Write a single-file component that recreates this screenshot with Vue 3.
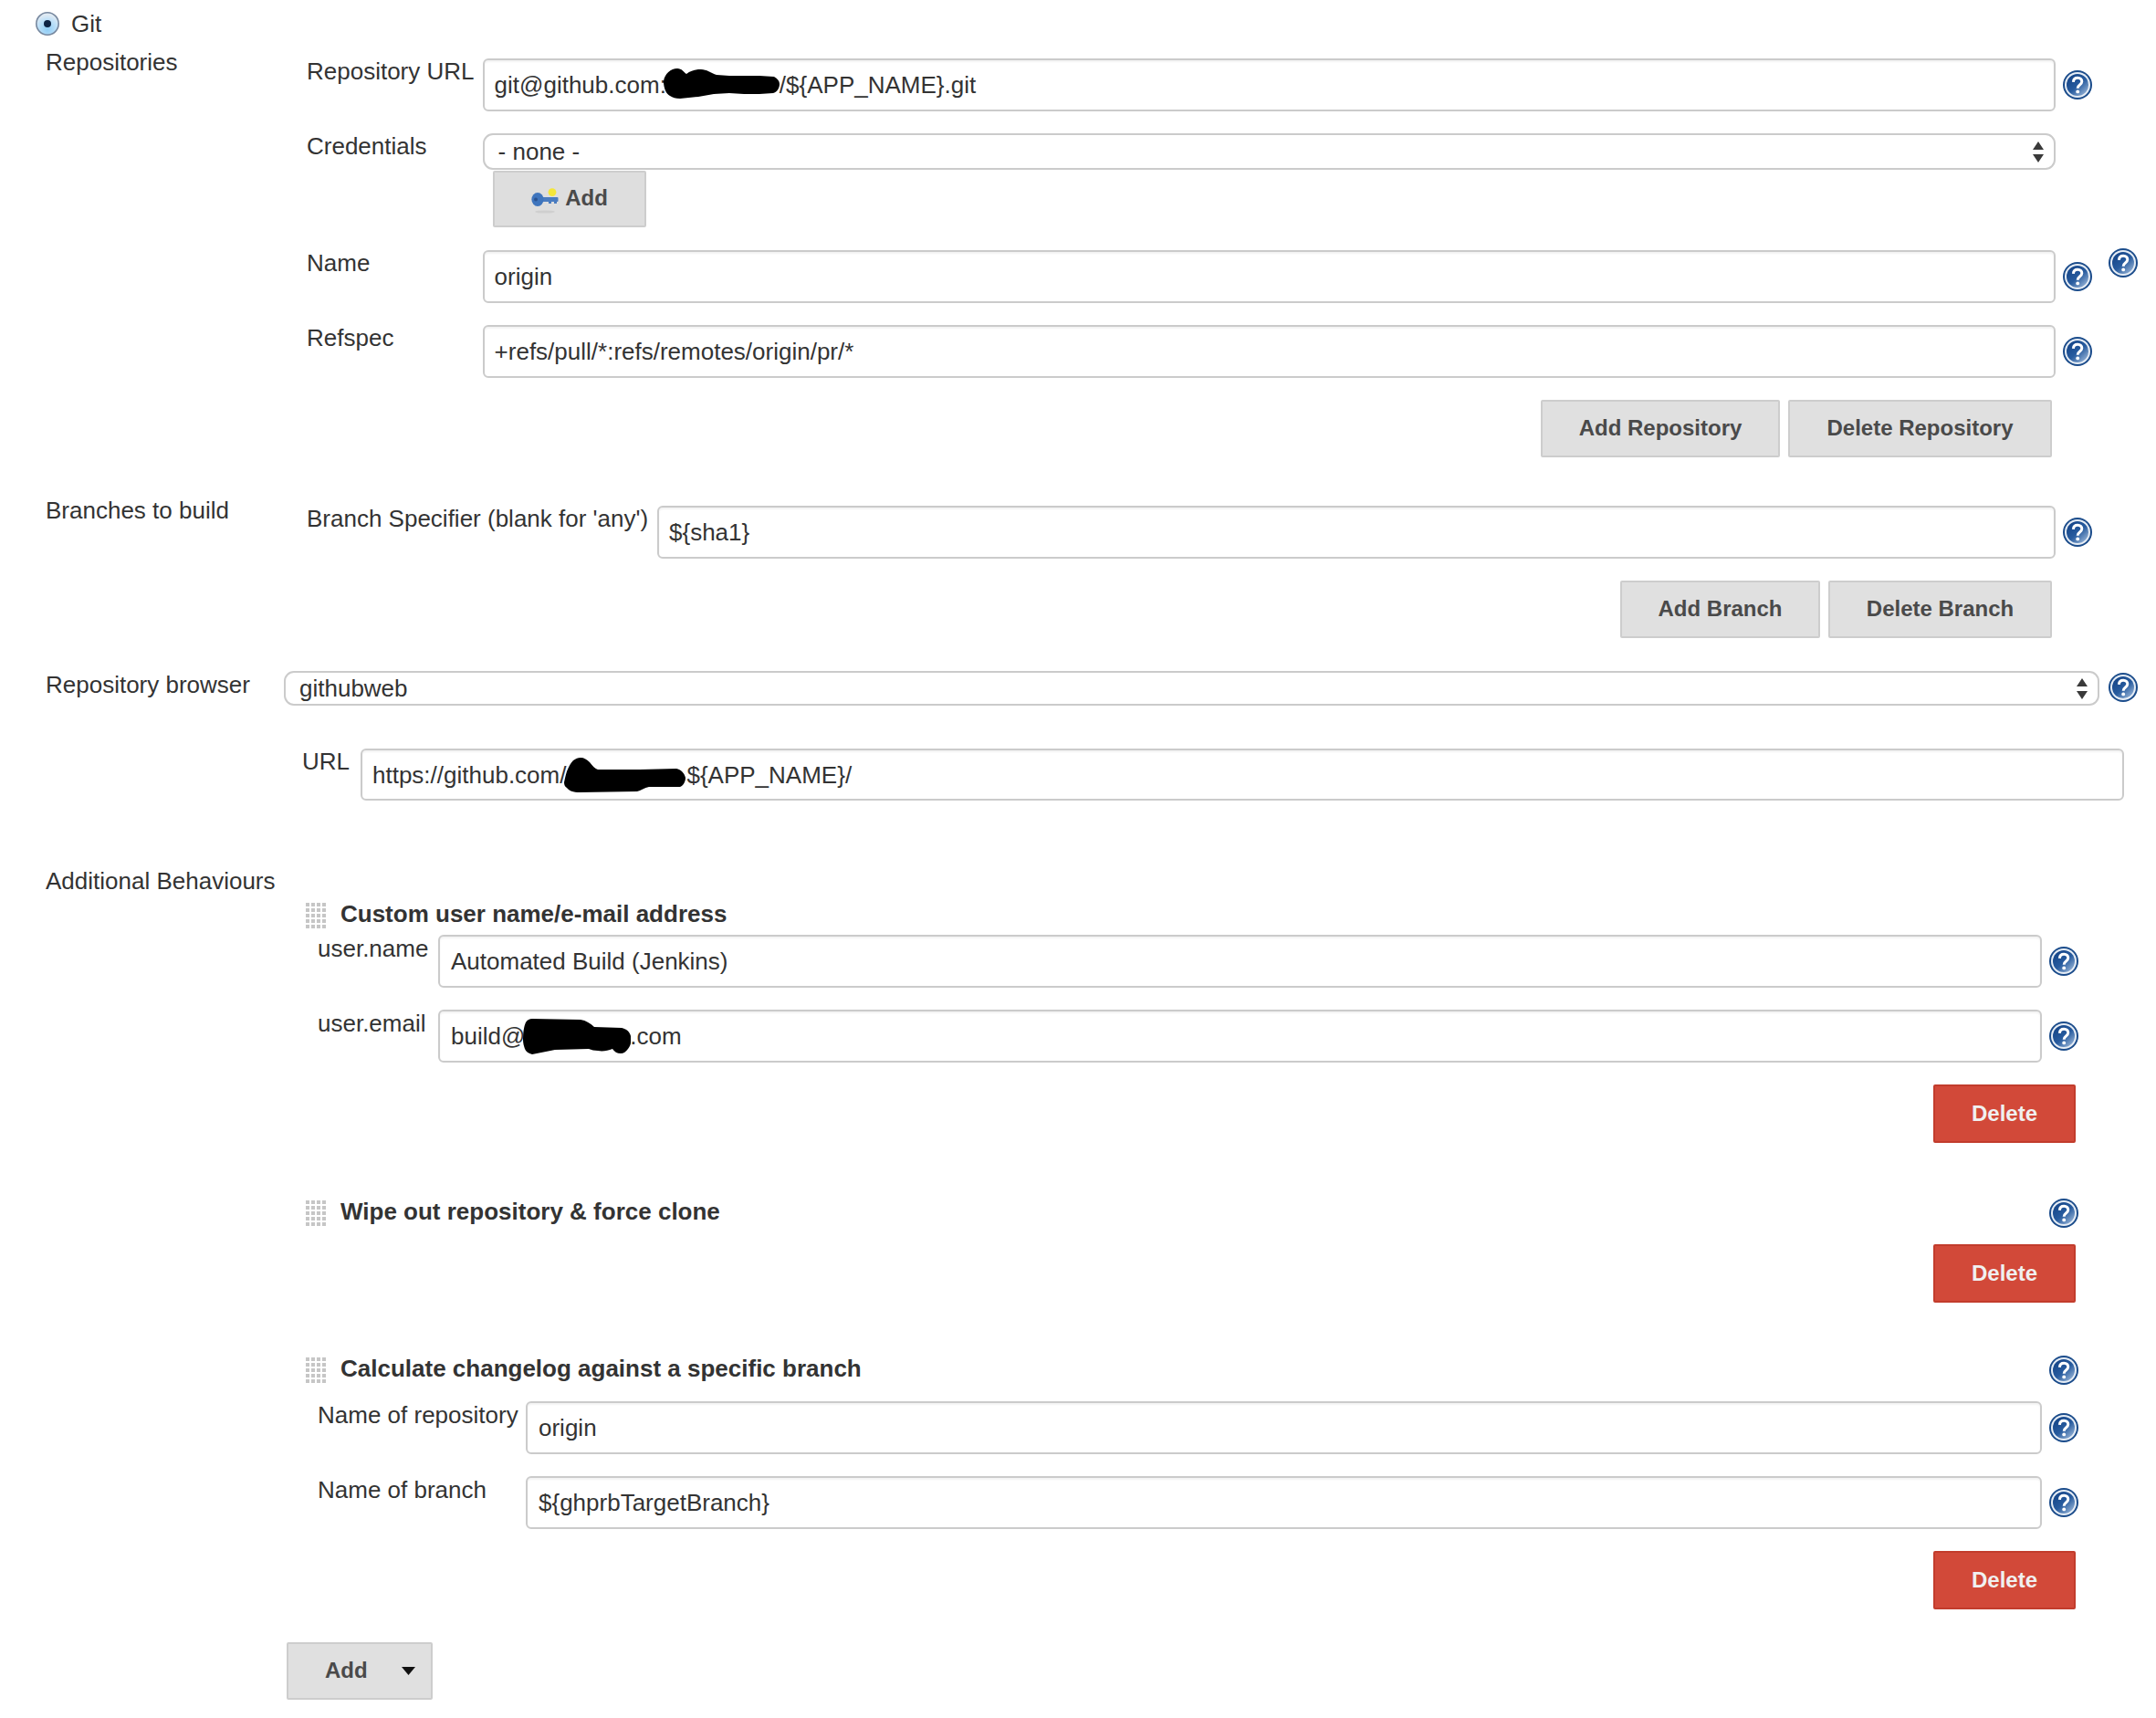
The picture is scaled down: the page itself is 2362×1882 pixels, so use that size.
<script setup>
const blobs = {
  a: 'M0 14C1 6 8 0 15 0C20 0 22 4 25 6C30 2 36 1 41 1C47 1 52 5 58 7L72 8L105 8L121 9C125 11 127 14 127 17C127 22 124 26 120 27L105 28L88 28L72 27L55 28L38 31L18 33C13 33 10 32 7 30C3 28 0 22 0 14Z',
  b: 'M0 27C1 22 2 18 3 15C5 10 7 6 10 3C13 1 15 0 18 0C22 0 25 2 28 5C31 9 34 12 37 13L83 13L123 12C128 13 132 17 133 22C133 27 130 31 127 32L93 32C88 33 84 36 80 37L17 38C10 38 5 36 3 33C1 32 0 30 0 27Z',
  c: 'M0 23C0 15 1 8 3 4C5 1 7 0 10 0L63 1C69 2 74 5 78 9L108 10C113 11 117 14 118 19C119 25 118 29 115 33C113 36 110 38 107 38C103 38 100 36 98 33C93 35 87 36 82 35C78 35 75 34 72 33L35 34L10 39C6 38 3 36 2 33C1 30 0 27 0 23Z'
}
</script>

<template>
  <div class="page">
    <svg class="sprite" width="0" height="0" aria-hidden="true">
      <defs>
        <linearGradient id="core" x1="0.15" y1="0.1" x2="0.9" y2="0.95">
          <stop offset="0" stop-color="#164689" />
          <stop offset="0.5" stop-color="#285c9f" />
          <stop offset="1" stop-color="#9ab6d8" />
        </linearGradient>
        <radialGradient id="radioFill" cx="0.5" cy="0.75" r="0.65">
          <stop offset="0" stop-color="#8fcdf6" />
          <stop offset="0.7" stop-color="#c3e2f8" />
          <stop offset="1" stop-color="#dfeaf3" />
        </radialGradient>
        <symbol id="help" viewBox="0 0 32 32">
          <circle cx="16" cy="16" r="16" fill="#1b4c8b" />
          <circle cx="16" cy="16" r="14" fill="#e6edf5" />
          <circle cx="16" cy="16" r="12" fill="url(#core)" />
          <path d="M11.4 12.8C11.6 9.8 13.6 8.3 16.2 8.3C19 8.3 20.8 10 20.8 12.3C20.8 14.3 19.6 15.2 18.2 16.2C16.8 17.2 16.2 18 16.2 19.8" fill="none" stroke="#fff" stroke-width="3" />
          <circle cx="16.2" cy="23.4" r="1.9" fill="#fff" />
        </symbol>
        <symbol id="grip" viewBox="0 0 23 29">
          <g fill="#c6c6c6">
            <rect v-for="d in 20" :key="d" :x="((d - 1) % 4) * 6 + 1" :y="Math.floor((d - 1) / 4) * 6 + 1" width="4" height="4" />
          </g>
        </symbol>
        <symbol id="updown" viewBox="0 0 12 23">
          <path d="M6 0L12 9H0ZM0 14H12L6 23Z" fill="#3a3a3a" />
        </symbol>
      </defs>
    </svg>

    <div class="git-row">
      <svg class="radio" viewBox="0 0 26 26">
        <circle cx="13" cy="13" r="12.2" fill="url(#radioFill)" stroke="#77889f" stroke-width="1.6" />
        <circle cx="13" cy="13" r="4" fill="#0e2444" />
      </svg>
      <span>Git</span>
    </div>

    <section class="group repos">
      <div class="side">Repositories</div>
      <div class="body">
        <div class="row">
          <label class="key k193">Repository URL</label>
          <div class="field">git@github.com:<svg class="blob b1" width="127" height="33" viewBox="0 0 127 33"><path :d="blobs.a" /></svg>/${APP_NAME}.git</div>
          <svg class="help"><use href="#help" /></svg>
        </div>
        <div class="row">
          <label class="key k193">Credentials</label>
          <div class="select">- none -<svg class="updown"><use href="#updown" /></svg></div>
          <span class="help-gap"></span>
        </div>
        <button class="btn key-btn">
          <svg class="key-icon" viewBox="0 0 30 30" width="30" height="30">
            <ellipse cx="15" cy="26" rx="11" ry="1.6" fill="#cfcfcf" />
            <circle cx="23" cy="4.6" r="4.4" fill="#f4e63a" />
            <rect x="8" y="10" width="21.5" height="5" rx="1" fill="#4a7cc0" />
            <path d="M19 14h3v3h-3zM25 14h3v3h-3z" fill="#4a7cc0" />
            <ellipse cx="7" cy="12.5" rx="6.6" ry="7.6" fill="#3f75bd" />
            <circle cx="5" cy="12.5" r="2" fill="#2a5390" />
          </svg>
          Add
        </button>
        <div class="row name-row">
          <label class="key k193">Name</label>
          <div class="field">origin</div>
          <svg class="help"><use href="#help" /></svg>
          <svg class="help help-outer"><use href="#help" /></svg>
        </div>
        <div class="row">
          <label class="key k193">Refspec</label>
          <div class="field">+refs/pull/*:refs/remotes/origin/pr/*</div>
          <svg class="help"><use href="#help" /></svg>
        </div>
        <div class="actions">
          <button class="btn add-repo">Add Repository</button>
          <button class="btn del-repo">Delete Repository</button>
        </div>
      </div>
    </section>

    <section class="group branches">
      <div class="side">Branches to build</div>
      <div class="body">
        <div class="row">
          <label class="key k384">Branch Specifier (blank for 'any')</label>
          <div class="field">${sha1}</div>
          <svg class="help"><use href="#help" /></svg>
        </div>
        <div class="actions">
          <button class="btn add-branch">Add Branch</button>
          <button class="btn del-branch">Delete Branch</button>
        </div>
      </div>
    </section>

    <section class="browser">
      <div class="side browser-side">Repository browser</div>
      <div class="select browser-select">githubweb<svg class="updown"><use href="#updown" /></svg></div>
      <svg class="help browser-help"><use href="#help" /></svg>
    </section>

    <section class="url-row">
      <label class="key url-key">URL</label>
      <div class="field">https://github.com/<svg class="blob b2" width="133" height="38" viewBox="0 0 133 38"><path :d="blobs.b" /></svg>${APP_NAME}/</div>
    </section>

    <section class="group behaviours">
      <div class="side behaviours-side">Additional Behaviours</div>
      <div class="behaviours-body">
        <div class="behaviour first">
          <div class="title-row">
            <svg class="grip"><use href="#grip" /></svg>
            <b>Custom user name/e-mail address</b>
          </div>
          <div class="row inset tight">
            <label class="key k132">user.name</label>
            <div class="field">Automated Build (Jenkins)</div>
            <svg class="help"><use href="#help" /></svg>
          </div>
          <div class="row inset">
            <label class="key k132">user.email</label>
            <div class="field">build@<svg class="blob b3" width="118" height="39" viewBox="0 0 118 39"><path :d="blobs.c" /></svg>.com</div>
            <svg class="help"><use href="#help" /></svg>
          </div>
          <div class="del-row"><button class="btn danger">Delete</button></div>
        </div>

        <div class="behaviour wipe">
          <div class="title-row">
            <svg class="grip"><use href="#grip" /></svg>
            <b>Wipe out repository &amp; force clone</b>
            <svg class="help title-help"><use href="#help" /></svg>
          </div>
          <div class="del-row short"><button class="btn danger">Delete</button></div>
        </div>

        <div class="behaviour last">
          <div class="title-row">
            <svg class="grip"><use href="#grip" /></svg>
            <b>Calculate changelog against a specific branch</b>
            <svg class="help title-help"><use href="#help" /></svg>
          </div>
          <div class="row inset mid">
            <label class="key k228">Name of repository</label>
            <div class="field">origin</div>
            <svg class="help"><use href="#help" /></svg>
          </div>
          <div class="row inset">
            <label class="key k228">Name of branch</label>
            <div class="field">${ghprbTargetBranch}</div>
            <svg class="help"><use href="#help" /></svg>
          </div>
          <div class="del-row"><button class="btn danger">Delete</button></div>
        </div>

        <button class="btn add-menu">Add<svg class="caret" viewBox="0 0 15 9"><path d="M0 0H15L7.5 9Z" /></svg></button>
      </div>
    </section>
  </div>
</template>

<style scoped>
.page {
  width: 2362px;
  height: 1882px;
  position: relative;
  overflow: hidden;
  background: #fff;
  color: #333;
  font: 26px/30px "Liberation Sans", Arial, sans-serif;
}
.sprite { position: absolute; }
.git-row {
  display: flex;
  align-items: center;
  height: 26px;
  padding: 13px 0 0 39px;
  gap: 13px;
}
.radio { width: 26px; height: 26px; }
.group { display: flex; align-items: flex-start; padding-left: 50px; }
.side { width: 286px; flex: none; }
.body { width: 2026px; flex: none; }
.repos { margin-top: 25px; }
.repos > .side { margin-top: -11px; }
.row { display: flex; align-items: flex-start; width: 1956px; margin-bottom: 24px; }
.key { flex: none; margin-top: -1px; white-space: nowrap; }
.k193 { width: 192.6px; }
.k384 { width: 384px; }
.k132 { width: 132px; }
.k228 { width: 228px; }
.field {
  flex: 1;
  min-width: 0;
  display: flex;
  align-items: center;
  height: 58px;
  box-sizing: border-box;
  padding: 0 11px;
  border: 2px solid #cbcbcb;
  border-radius: 6px;
  box-shadow: inset 0 2px 2px #f3f3f3;
  white-space: pre;
  background: #fff;
}
.select {
  flex: 1;
  display: flex;
  align-items: center;
  height: 40px;
  box-sizing: border-box;
  padding: 0 15px;
  border: 2px solid #cbcbcb;
  border-radius: 11px;
  background: #fff;
  white-space: pre;
}
.updown { width: 12px; height: 23px; margin-left: auto; margin-right: -4px; }
.help { flex: none; width: 32px; height: 32px; margin: 13px 0 0 8px; }
.help-gap { flex: none; width: 40px; }
.help-outer { margin: -2px 0 0 18px; }
.name-row { width: 2006px; }
.blob { flex: none; fill: #000; }
.b1 { margin: -3px 0 0 -3px; }
.b2 { margin: 0 1px 0 -2px; }
.b3 { margin: 1px -1px 0 -2px; }
.btn {
  display: block;
  box-sizing: border-box;
  height: 63px;
  padding: 0 0 2px;
  border: 2px solid #cdcdcd;
  border-radius: 2px;
  background: #e0e0e0;
  color: #4a4a4a;
  font: bold 24px "Liberation Sans", Arial, sans-serif;
  text-align: center;
}
.key-btn {
  display: flex;
  align-items: center;
  justify-content: center;
  gap: 7px;
  width: 168px;
  height: 62px;
  margin: -23px 0 25px 204px;
  background: #dedede;
}
.key-icon { margin-top: 8px; }
.actions { display: flex; justify-content: flex-end; width: 1912px; gap: 9px; }
.add-repo { width: 262px; }
.del-repo { width: 289px; }
.branches { margin-top: 53px; }
.branches > .side { margin-top: -10px; }
.add-branch { width: 219px; }
.del-branch { width: 245px; }
.browser {
  display: flex;
  align-items: flex-start;
  width: 2292px;
  padding-left: 50px;
  margin-top: 36px;
}
.browser-side { width: 261px; }
.browser-select { height: 38px; }
.browser-help { margin: 2px 0 0 10px; }
.url-row {
  display: flex;
  align-items: flex-start;
  width: 1996px;
  padding-left: 331px;
  margin-top: 47px;
}
.url-key { width: 64px; }
.url-row .field { height: 57px; }
.behaviours { margin-top: 73px; }
.behaviours-side { width: 264px; }
.behaviours-body { width: 1963px; flex: none; padding-top: 38px; }
.behaviour { padding-left: 20px; }
.behaviour.first { margin-bottom: 62px; }
.behaviour.wipe { margin-bottom: 59px; }
.behaviour.last { margin-bottom: 36px; }
.title-row { display: flex; align-items: flex-start; width: 1943px; }
.title-row b { margin: -2px 0 0 16px; }
.grip { flex: none; width: 23px; height: 29px; }
.title-help { margin: -1px 0 0 auto; }
.inset { padding-left: 14px; width: 1943px; box-sizing: border-box; margin-bottom: 24px; }
.inset .key { margin-top: 0; }
.inset .field { padding: 0 12px; }
.tight { margin-top: 7px; }
.mid { margin-top: 18px; }
.del-row { display: flex; justify-content: flex-end; width: 1940px; }
.short { margin-top: 18px; }
.danger { width: 156px; height: 64px; padding: 0; background: #d24939; border-color: #c23c2c; color: #f0f0f0; }
.add-menu {
  display: flex;
  align-items: center;
  justify-content: flex-start;
  width: 160px;
  padding-left: 40px;
}
.caret { width: 15px; height: 9px; margin: 2px 17px 0 auto; fill: #111; }
</style>

<style>
html, body { margin: 0; background: #fff; }
</style>
